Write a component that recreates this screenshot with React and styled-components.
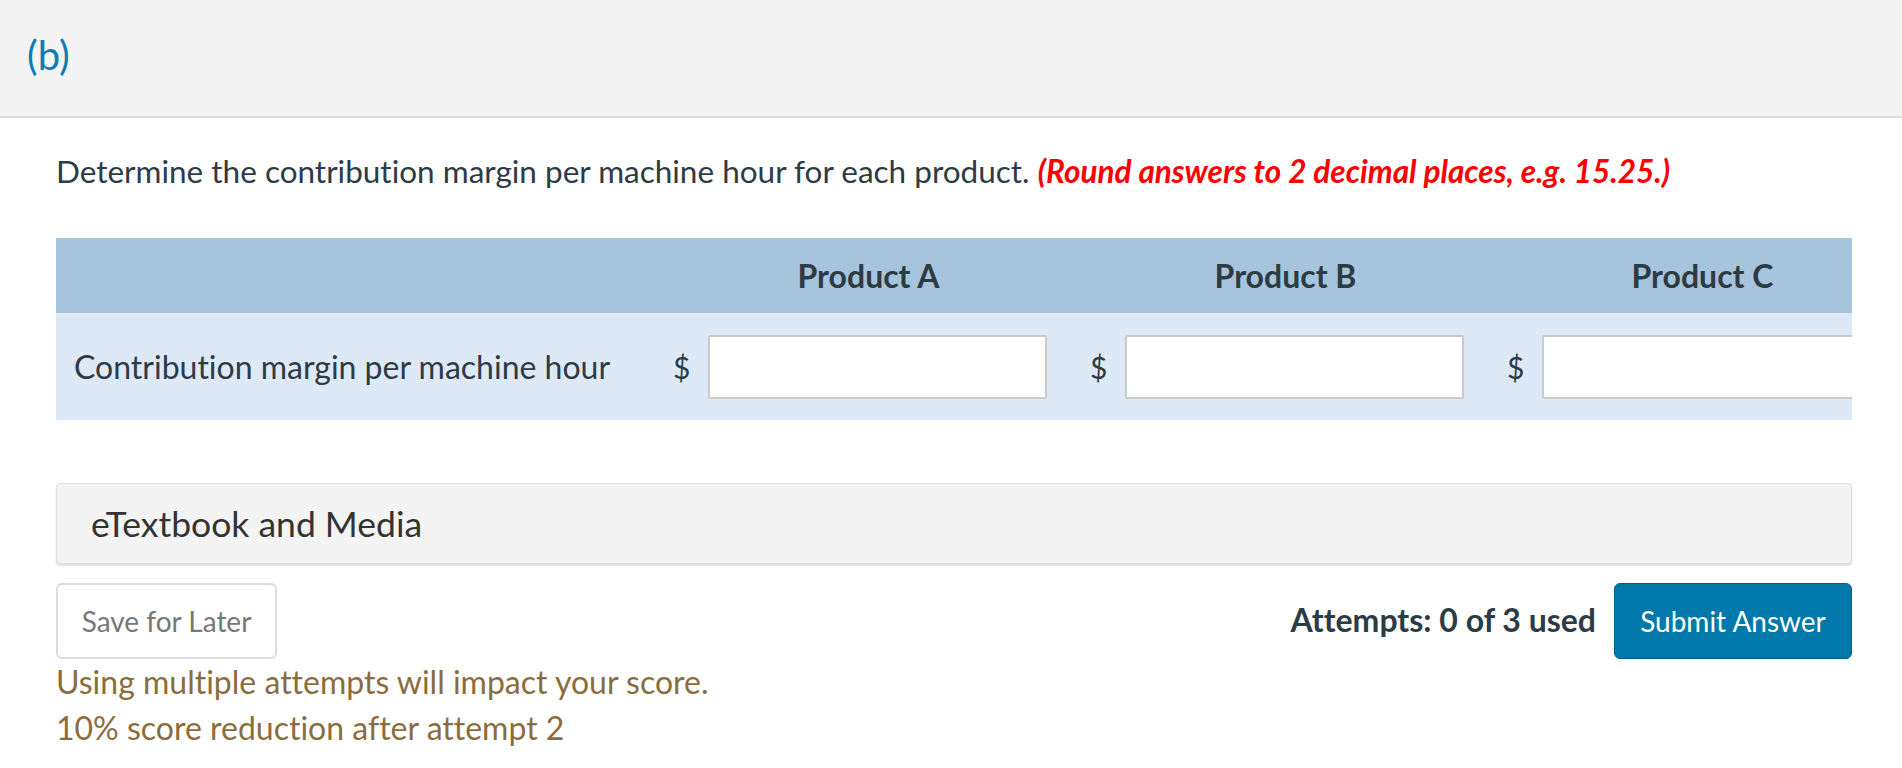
import styled, { createGlobalStyle } from "styled-components";

const GlobalStyle = createGlobalStyle`
    body {
        margin: 0;
        font-family: Lato, "Open Sans", sans-serif;
        font-variant-ligatures: none;
        color: #2d3b45;
        background: #ffffff;
    }
`;

const products = ["Product A", "Product B", "Product C"];

export default function App() {
    return (
        <>
            <GlobalStyle />
            <PartHeader>
                <PartLabel>(b)</PartLabel>
            </PartHeader>
            <Content>
                <Question>
                    Determine the contribution margin per machine hour for each product.{" "}
                    <Hint>(Round answers to 2 decimal places, e.g. 15.25.)</Hint>
                </Question>

                <TableWrap>
                    <Grid>
                        <HeadCell />
                        {products.map((p) => (
                            <HeadCell key={p}>{p}</HeadCell>
                        ))}
                        <LabelCell>Contribution margin per machine hour</LabelCell>
                        {products.map((p) => (
                            <InputCell key={p}>
                                <Dollar>$</Dollar>
                                <AnswerInput type="text" aria-label={p} />
                            </InputCell>
                        ))}
                    </Grid>
                </TableWrap>

                <MediaPanel>eTextbook and Media</MediaPanel>

                <Footer>
                    <SaveButton>Save for Later</SaveButton>
                    <SubmitGroup>
                        <Attempts>Attempts: 0 of 3 used</Attempts>
                        <SubmitButton>Submit Answer</SubmitButton>
                    </SubmitGroup>
                </Footer>

                <Notice>
                    Using multiple attempts will impact your score.
                    <br />
                    10% score reduction after attempt 2
                </Notice>
            </Content>
        </>
    );
}

const PartHeader = styled.header`
    height: 116px;
    background: #f4f4f4;
    border-bottom: 2px solid #dcdcdc;
    display: flex;
    align-items: center;
    padding-left: 27px;
`;

const PartLabel = styled.span`
    color: #0b7db1;
    font-size: 40px;
    margin-top: -6px;
`;

const Content = styled.main`
    padding: 0 50px 0 56px;
`;

const Question = styled.p`
    margin: 32px 0 46px;
    font-size: 31.5px;
    line-height: 42px;
`;

const Hint = styled.em`
    color: #ff0000;
    font-weight: 700;
`;

const TableWrap = styled.div`
    overflow: hidden;
    width: 100%;
`;

const Grid = styled.div`
    display: grid;
    grid-template-columns: 604px repeat(3, 417px);
    grid-template-rows: 75px 107px;
    width: max-content;
`;

const HeadCell = styled.div`
    background: #a6c4dc;
    display: flex;
    align-items: center;
    justify-content: center;
    font-size: 32px;
    font-weight: 700;
`;

const LabelCell = styled.div`
    background: #dde9f6;
    display: flex;
    align-items: center;
    padding-left: 18px;
    font-size: 32px;
`;

const InputCell = styled.div`
    background: #dde9f6;
    display: flex;
    align-items: center;
    padding-left: 13px;
`;

const Dollar = styled.span`
    width: 35px;
    font-size: 30px;
`;

const AnswerInput = styled.input`
    width: 339px;
    height: 64px;
    box-sizing: border-box;
    border: 2px solid #cacaca;
    border-radius: 2px;
    background: #ffffff;
    font: inherit;
    font-size: 30px;
    padding: 0 10px;
    outline: none;
`;

const MediaPanel = styled.div`
    margin-top: 63px;
    height: 81px;
    box-sizing: border-box;
    border: 1px solid #dedede;
    border-radius: 4px;
    background: #f4f4f4;
    box-shadow: 0 2px 2px rgba(0, 0, 0, 0.12);
    display: flex;
    align-items: center;
    padding-left: 34px;
    font-size: 35.5px;
    color: #333333;
`;

const Footer = styled.div`
    margin-top: 19px;
    display: flex;
    justify-content: space-between;
    align-items: center;
`;

const SaveButton = styled.button`
    width: 221px;
    height: 76px;
    border: 2px solid #dddddd;
    border-radius: 6px;
    background: #ffffff;
    color: #777777;
    font-family: Lato, sans-serif;
    font-size: 28px;
`;

const SubmitGroup = styled.div`
    display: flex;
    align-items: center;
    gap: 18px;
`;

const Attempts = styled.span`
    font-size: 32px;
    font-weight: 700;
    margin-top: -4px;
`;

const SubmitButton = styled.button`
    width: 238px;
    height: 76px;
    border: 1px solid #00618c;
    border-radius: 6px;
    background: #0078aa;
    color: #ffffff;
    font-family: Lato, sans-serif;
    font-size: 28px;
`;

const Notice = styled.p`
    margin: 0;
    font-size: 32px;
    line-height: 46px;
    color: #8b6d3c;
`;
